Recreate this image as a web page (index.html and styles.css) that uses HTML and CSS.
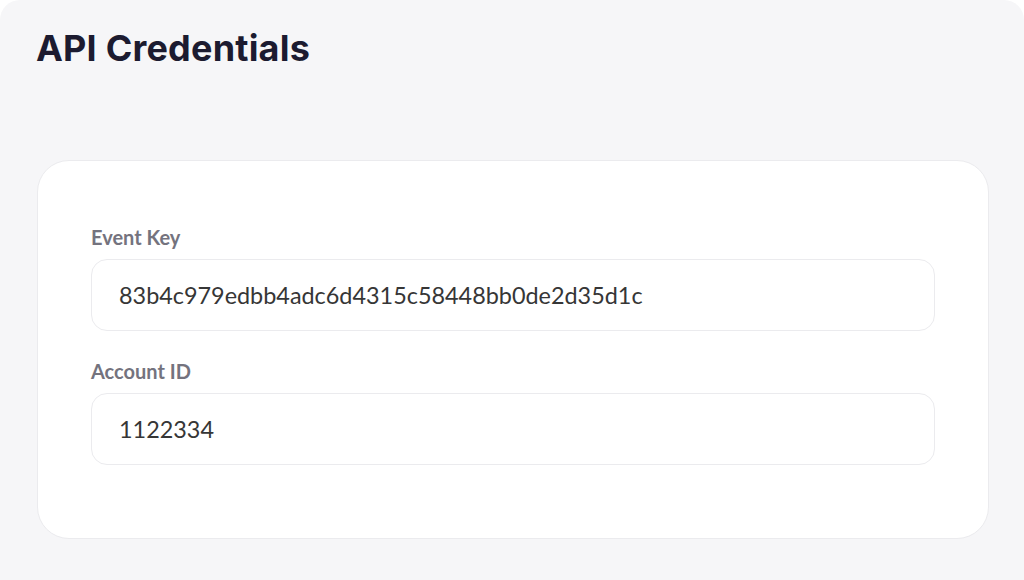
FILE: index.html
```html
<!DOCTYPE html>
<html lang="en">
<head>
    <meta charset="UTF-8">
    <meta name="viewport" content="width=device-width, initial-scale=1.0">
    <title>API Credentials</title>
    <link rel="stylesheet" href="styles.css">
</head>
<body>

<div class="panel">
    <h1>API Credentials</h1>

    <div class="card">
        <div class="field">
            <label for="eventKey">Event Key</label>
            <div class="value" id="eventKey">83b4c979edbb4adc6d4315c58448bb0de2d35d1c</div>
        </div>
        <div class="field">
            <label for="accountId">Account ID</label>
            <div class="value" id="accountId">1122334</div>
        </div>
    </div>
</div>

</body>
</html>
```

FILE: styles.css
```css
body {
    margin: 0;
    padding: 0;
    background-color: white;
    font-family: Lato, "Open Sans", sans-serif;
}
.panel {
    background: #f6f6f8;
    border-radius: 20px 20px 0 0;
    min-height: 600px;
    padding: 26px 35px 0 37px;
    box-sizing: border-box;
}
h1 {
    margin: 0 0 0 -1px;
    font-family: Inter, sans-serif;
    font-size: 36px;
    font-weight: 700;
    letter-spacing: 0.2px;
    color: #1c1b30;
}
.card {
    margin-top: 90px;
    background: white;
    border: 1px solid #ebebee;
    border-radius: 32px;
    padding: 64px 53px 73px;
    display: flex;
    flex-direction: column;
    gap: 28px;
}
.field {
    display: flex;
    flex-direction: column;
    gap: 10px;
}
.field label {
    font-size: 20px;
    font-weight: 700;
    line-height: 24px;
    color: #74737e;
}
.value {
    height: 70px;
    border: 1px solid #ebebee;
    border-radius: 16px;
    padding: 0 27px;
    display: flex;
    align-items: center;
    font-size: 23.4px;
    color: #363636;
}
```
